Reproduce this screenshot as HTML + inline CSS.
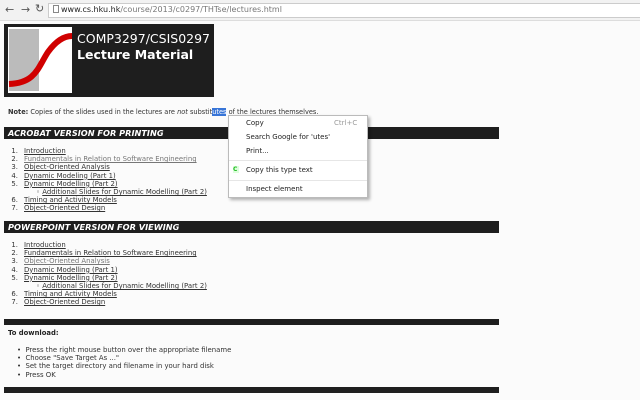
<!DOCTYPE html>
<html><head><style>
*{margin:0;padding:0;box-sizing:border-box}
body{width:640px;height:400px;overflow:hidden;background:#fbfbfb;font-family:"DejaVu Sans",Verdana,sans-serif;position:relative;color:#222}
.a{position:absolute;white-space:nowrap}
.bar{position:absolute;left:4px;width:495px;background:#1e1e1e}
.h{color:#fff;font-weight:bold;font-style:italic;font-size:8.2px;padding-left:4px;line-height:12px;font-family:"DejaVu Sans",sans-serif}
.li{position:absolute;font-size:6.9px;line-height:8.2px;white-space:nowrap;color:#333}
.li u{color:#333}
.n{display:inline-block;width:18px;text-align:right;margin-right:6px}
.m{position:absolute;left:228px;top:115px;width:140px;height:83px;background:#fff;border:1px solid #bbb;box-shadow:2px 2px 3px rgba(0,0,0,.3);font-size:7px;color:#222}
.m div{position:absolute;left:17px;white-space:nowrap}
</style></head><body>
<div class="a" style="left:0;top:0;width:640px;height:21px;background:#f2f2f2;border-bottom:1px solid #ddd"></div>
<div class="a" style="left:5px;top:3px;font-size:11px;color:#555">&#8592;</div>
<div class="a" style="left:21px;top:3px;font-size:11px;color:#555">&#8594;</div>
<div class="a" style="left:35px;top:2px;font-size:11px;color:#555">&#8635;</div>
<div class="a" style="left:48px;top:3px;width:600px;height:15px;background:#fff;border:1px solid #ccc"></div>
<div class="a" style="left:53px;top:5px;width:6px;height:8px;border:1px solid #888"></div>
<div class="a" style="left:61px;top:5px;font-size:8px;color:#222">www.cs.hku.hk<span style="color:#777">/course/2013/c0297/THTse/lectures.html</span></div>

<div class="a" style="left:4px;top:24px;width:210px;height:73px;background:#1e1e1e"></div>
<div class="a" style="left:8px;top:27px;width:64px;height:66px;background:#fff"></div>
<div class="a" style="left:9px;top:29px;width:30px;height:62px;background:#bbb"></div>
<svg class="a" style="left:8px;top:27px" width="64" height="66"><path d="M1 57 C28 56 30 40 40 25 C48 14 56 9 64 9" stroke="#d00000" stroke-width="6" fill="none"/></svg>
<div class="a" style="left:77px;top:31px;font-size:12.5px;color:#fff">COMP3297/CSIS0297</div>
<div class="a" style="left:77px;top:47px;font-size:12.5px;color:#fff;font-weight:bold">Lecture Material</div>

<div class="a" style="left:8px;top:108px;font-size:6.6px;color:#333"><b>Note:</b> Copies of the slides used in the lectures are <i>not</i> substit<span style="background:#3875d7;color:#fff">utes</span> of the lectures themselves.</div>

<div class="bar" style="top:127px;height:12px"><div class="h">ACROBAT VERSION FOR PRINTING</div></div>
<div class="li" style="left:0;top:147px">
<div><span class="n">1.</span><u>Introduction</u></div>
<div><span class="n">2.</span><u style="color:#777">Fundamentals in Relation to Software Engineering</u></div>
<div><span class="n">3.</span><u>Object-Oriented Analysis</u></div>
<div><span class="n">4.</span><u>Dynamic Modeling (Part 1)</u></div>
<div><span class="n">5.</span><u>Dynamic Modelling (Part 2)</u></div>
<div style="padding-left:36px">&#9702; <u>Additional Slides for Dynamic Modelling (Part 2)</u></div>
<div><span class="n">6.</span><u>Timing and Activity Models</u></div>
<div><span class="n">7.</span><u>Object-Oriented Design</u></div>
</div>

<div class="bar" style="top:221px;height:12px"><div class="h">POWERPOINT VERSION FOR VIEWING</div></div>
<div class="li" style="left:0;top:241px">
<div><span class="n">1.</span><u>Introduction</u></div>
<div><span class="n">2.</span><u>Fundamentals in Relation to Software Engineering</u></div>
<div><span class="n">3.</span><u style="color:#777">Object-Oriented Analysis</u></div>
<div><span class="n">4.</span><u>Dynamic Modelling (Part 1)</u></div>
<div><span class="n">5.</span><u>Dynamic Modelling (Part 2)</u></div>
<div style="padding-left:36px">&#9702; <u>Additional Slides for Dynamic Modelling (Part 2)</u></div>
<div><span class="n">6.</span><u>Timing and Activity Models</u></div>
<div><span class="n">7.</span><u>Object-Oriented Design</u></div>
</div>

<div class="bar" style="top:319px;height:6px"></div>
<div class="a" style="left:8px;top:329px;font-size:6.8px;font-weight:bold;color:#222">To download:</div>
<div class="li" style="left:17px;top:346px">
<div>&#8226;&nbsp; Press the right mouse button over the appropriate filename</div>
<div>&#8226;&nbsp; Choose "Save Target As ..."</div>
<div>&#8226;&nbsp; Set the target directory and filename in your hard disk</div>
<div>&#8226;&nbsp; Press OK</div>
</div>
<div class="bar" style="top:387px;height:6px"></div>

<div class="m">
<div style="top:3px">Copy</div><div style="top:3px;left:105px;color:#999">Ctrl+C</div>
<div style="top:17px">Search Google for 'utes'</div>
<div style="top:31px">Print...</div>
<div style="top:44px;left:0;width:138px;border-top:1px solid #e6e6e6"></div>
<div style="top:50px;left:4px;width:6px;height:7px;background:#dfd;color:#2b2;font-size:6px;font-weight:bold;line-height:7px">C</div>
<div style="top:50px">Copy this type text</div>
<div style="top:64px;left:0;width:138px;border-top:1px solid #e6e6e6"></div>
<div style="top:69px">Inspect element</div>
</div>
</body></html>
